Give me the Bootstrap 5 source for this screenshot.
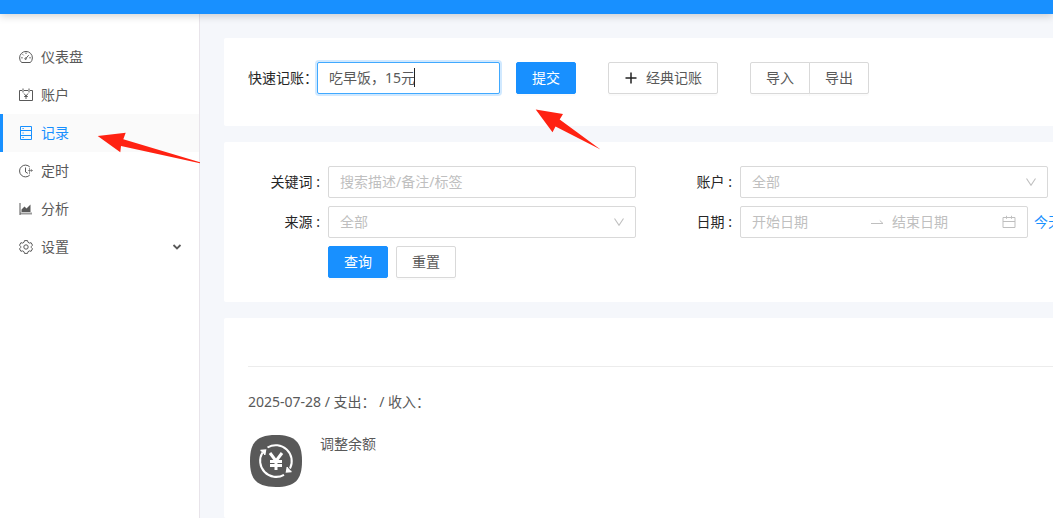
<!DOCTYPE html>
<html lang="zh-CN">
<head>
<meta charset="utf-8">
<meta name="viewport" content="width=device-width, initial-scale=1">
<title>记录</title>
<link rel="stylesheet" href="https://cdn.jsdelivr.net/npm/bootstrap@5.3.0/dist/css/bootstrap.min.css">
<style>
:root { --brand: #1890ff; --line: #d9d9d9; --hint: #bfbfbf; --ink: #595959; --page: #f5f7fb; }
body { font: 14px/22px "Noto Sans", "Noto Sans CJK SC", sans-serif; color: var(--ink); background: var(--page); }
.app-bar { height: 14px; background: var(--brand); box-shadow: 0 2px 8px rgba(0,0,0,.18); z-index: 2; }
.side { width: 200px; border-right: 1px solid #e8e4ea; }
.side .nav-link { height: 38px; padding: 0 16px; border-left: 3px solid transparent; color: var(--ink); gap: 8px; }
.side .nav-link.active { color: var(--brand); background: #fafafa; border-color: var(--brand); }
.ico { width: 14px; height: 14px; fill: none; stroke: currentColor; flex: none; }
.ico-caret { width: 10px; height: 10px; margin-right: 1px; }
.main-area { padding: 24px 0 0 24px; overflow-x: clip; min-width: 0; }
.panel { background: #fff; border-radius: 2px 0 0 2px; padding: 24px; }
.form-control, .form-select { height: 32px; font-size: 14px; line-height: 22px; padding: 4px 11px; border: 1px solid var(--line); border-radius: 2px; color: var(--ink); }
.form-control { padding: 3px 11px 5px; }
.form-control::placeholder { color: var(--hint); opacity: 1; }
.form-select { color: var(--hint); background-size: 12px 12px; background-position: right 10px center;
  --bs-form-select-bg-img: url("data:image/svg+xml,%3Csvg xmlns='http://www.w3.org/2000/svg' viewBox='0 0 12 12'%3E%3Cpath d='M1.5 2.5L6 9.2L10.500 2.500' fill='none' stroke='%23bfbfbf' stroke-width='1.1'/%3E%3C/svg%3E"); }
.btn { height: 32px; font-size: 14px; line-height: 22px; padding: 4px 15px; border-radius: 2px; --bs-btn-border-color: var(--line); --bs-btn-color: var(--ink); background: #fff; box-shadow: 0 2px 0 rgba(0,0,0,.016); }
.btn-primary { --bs-btn-color: #fff; --bs-btn-border-color: var(--brand); background: var(--brand); }
.btn-classic { margin: 0 32px; }
.dark-label { color: #262626; white-space: nowrap; }
.quick-label { width: 69px; }
.quick-box { width: 183px; }
.quick-box .form-control { border-color: #40a9ff; box-shadow: 0 0 0 2px rgba(24,144,255,.2); caret-color: transparent; }
.text-cursor { position: absolute; left: 97px; top: 6px; width: 1px; height: 19px; background: #222; }
.filters { display: grid; grid-template-columns: 1fr 1fr; gap: 8px 24px; padding-right: 5px; }
.field-row { display: grid; grid-template-columns: 80px minmax(0,1fr); align-items: center; }
.field-row > label { text-align: right; padding-right: 8px; }
.range { height: 32px; min-width: 0; border: 1px solid var(--line); border-radius: 2px; padding: 0 11px; color: var(--hint); }
.range input { border: 0; padding: 0; height: 22px; flex: 1 1 0; min-width: 0; color: var(--ink); outline: 0; background: none; }
.range input::placeholder { color: var(--hint); opacity: 1; }
.today { flex: 0 0 14px; min-width: 0; margin-left: 6px; white-space: nowrap; color: var(--brand); text-decoration: none; }
.rule { border-top: 1px solid #ececec; margin: 24px 0; }
.entry-icon { width: 56px; height: 56px; }
.pointer { position: absolute; fill: #ff2212; pointer-events: none; z-index: 3; }
.pointer-side { left: 94px; top: 18px; width: 103px; height: 32px; }
.pointer-submit { left: 287px; top: 47px; width: 66px; height: 41px; }
</style>
</head>
<body>
<div class="d-flex flex-column min-vh-100">
  <header class="app-bar position-relative"></header>
  <div class="d-flex flex-fill">
    <aside class="side bg-white flex-shrink-0 pt-4">
      <nav class="nav flex-column flex-nowrap">
        <a class="nav-link d-flex align-items-center" href="#"><svg class="ico" viewBox="0 0 14 14"><path d="M2.600 12.500a6.400 6.400 0 1 1 8.800 0zM6.900 8.400L9.700 5.200M7 2.500v1.500M2.200 7.800h1.500M10.300 7.800h1.500M3.600 4.300l1 1"/><circle cx="6.600" cy="8.700" r=".8"/></svg>仪表盘</a>
        <a class="nav-link d-flex align-items-center" href="#"><svg class="ico" viewBox="0 0 14 14"><path d="M3 2.500H.500v10h13v-10H11M5 2.500h4M4 .5v4M10 .5v4M5 5.500L7 8l2-2.500M7 8v3M5.200 8.500h3.600"/></svg>账户</a>
        <a class="nav-link active position-relative d-flex align-items-center" href="#" aria-current="page"><svg class="ico" viewBox="0 0 14 14"><path d="M1.500.5h11v13h-11zM1.500 4.500h11M1.500 9.500h11M3.500 2.500h1.200M3.500 7h1.200M3.500 11.500h1.200"/></svg>记录
          <svg class="pointer pointer-side" viewBox="97 132 103 32"><path d="M97.700 136L125.700 132.700L123.300 139.300L200 162.300V163.200L121 146L120.300 152.300Z"/></svg></a>
        <a class="nav-link d-flex align-items-center" href="#"><svg class="ico" viewBox="0 0 14 14"><path d="M10.800 3A5.900 5.900 0 1 0 10.800 11M6.500 3.500v4.500l2.300 1.300"/><path d="M10.500 4v6M9 6.500h5M12.300 5v3" stroke-opacity=".6"/></svg>定时</a>
        <a class="nav-link d-flex align-items-center" href="#"><svg class="ico" viewBox="0 0 14 14"><path d="M1 1v12"/><path fill="currentColor" stroke="none" d="M2.500 10V7.500L5.500 4.500l2 2 4-4V10z"/><path d="M1 11.500h12" stroke-opacity=".6" stroke-width="2"/></svg>分析</a>
        <a class="nav-link d-flex align-items-center" href="#"><svg class="ico" viewBox="0 0 14 14"><path d="M5.500.6h3l.5 1.700 1.400.8 1.700-.4 1.400 2.500-1.200 1.300v1l1.200 1.300-1.400 2.500-1.700-.4-1.400.8-.5 1.700h-3L5 11.700l-1.400-.8-1.700.4L.500 8.800l1.200-1.300v-1L.500 5.200l1.400-2.500 1.700.4L5 2.300z" stroke-linejoin="round"/><circle cx="7" cy="7" r="2.200"/></svg>设置<svg class="ico ico-caret ms-auto" viewBox="0 0 10 10"><path d="M1.500 3L5 6.500 8.500 3" stroke-width="1.800"/></svg></a>
      </nav>
    </aside>

    <main class="main-area flex-fill d-flex flex-column gap-3">
      <section class="panel pb-0">
        <form class="d-flex align-items-center position-relative mb-2 pb-4">
          <label class="dark-label quick-label" for="quick">快速记账：</label>
          <div class="quick-box position-relative"><input class="form-control" id="quick" value="吃早饭，15元"><span class="text-cursor"></span></div>
          <button type="button" class="btn btn-primary ms-3">提交</button>
          <button type="button" class="btn btn-classic d-flex align-items-center gap-2"><svg class="ico" viewBox="0 0 14 14"><path d="M7 1.500v11M1.500 7h11" stroke="#222" stroke-width="1.500"/></svg>经典记账</button>
          <div class="btn-group"><button type="button" class="btn">导入</button><button type="button" class="btn">导出</button></div>
          <svg class="pointer pointer-submit" viewBox="535 109 66 41"><path d="M535.700 109.500L563 114L559.700 119.500L600.500 149.500L555.500 126.500L552.500 132.300Z"/></svg>
        </form>
      </section>

      <section class="panel filters">
        <div class="field-row"><label class="dark-label" for="kw">关键词 :</label><input class="form-control" id="kw" placeholder="搜索描述/备注/标签"></div>
        <div class="field-row"><label class="dark-label" for="acct">账户 :</label><select class="form-select" id="acct"><option>全部</option></select></div>
        <div class="field-row"><label class="dark-label" for="src">来源 :</label><select class="form-select" id="src"><option>全部</option></select></div>
        <div class="field-row"><label class="dark-label" for="from">日期 :</label>
          <div class="d-flex align-items-center">
            <div class="range flex-fill d-flex align-items-center">
              <input id="from" placeholder="开始日期">
              <svg class="ico mx-2" viewBox="0 0 14 14"><path d="M1 8.500h12L9.800 5.500"/></svg>
              <input aria-label="结束日期" placeholder="结束日期">
              <svg class="ico" viewBox="0 0 14 14"><path d="M1 2.500h12v10H1zM1 6.500h12M4.500.8v3M9.500.8v3"/></svg>
            </div>
            <a class="today" href="#">今天</a>
          </div></div>
        <div class="field-row"><span></span><div class="d-flex gap-2"><button type="button" class="btn btn-primary">查询</button><button type="button" class="btn">重置</button></div></div>
      </section>

      <section class="panel pe-0 flex-fill">
        <div class="rule mt-4"></div>
        <div>2025-07-28 / 支出： / 收入：</div>
        <div class="d-flex gap-3 pt-1 mt-3">
          <svg class="entry-icon" viewBox="0 0 56 56" fill="none" stroke="#fff" stroke-width="2"><path d="M28 2C47 2 54 9 54 28S47 54 28 54 2 47 2 28 9 2 28 2z" fill="#595959" stroke="none"/><path d="M19.500 14.500A16 16 0 0 1 42 35.500M36 41.800A16 16 0 0 1 14.500 19.500"/><path d="M12.500 17.500l5-.5-.8 5M43.500 38.500l-5 .5.8-5" fill="#fff" stroke-width="1.500"/><path d="M22 20l6 8 6-8M28 27v10M22 28.500h12M22 32.500h12" stroke-width="3"/></svg>
          <div>调整余额</div>
        </div>
      </section>
    </main>
  </div>
</div>
<script src="https://cdn.jsdelivr.net/npm/bootstrap@5.3.0/dist/js/bootstrap.bundle.min.js"></script>
</body>
</html>
